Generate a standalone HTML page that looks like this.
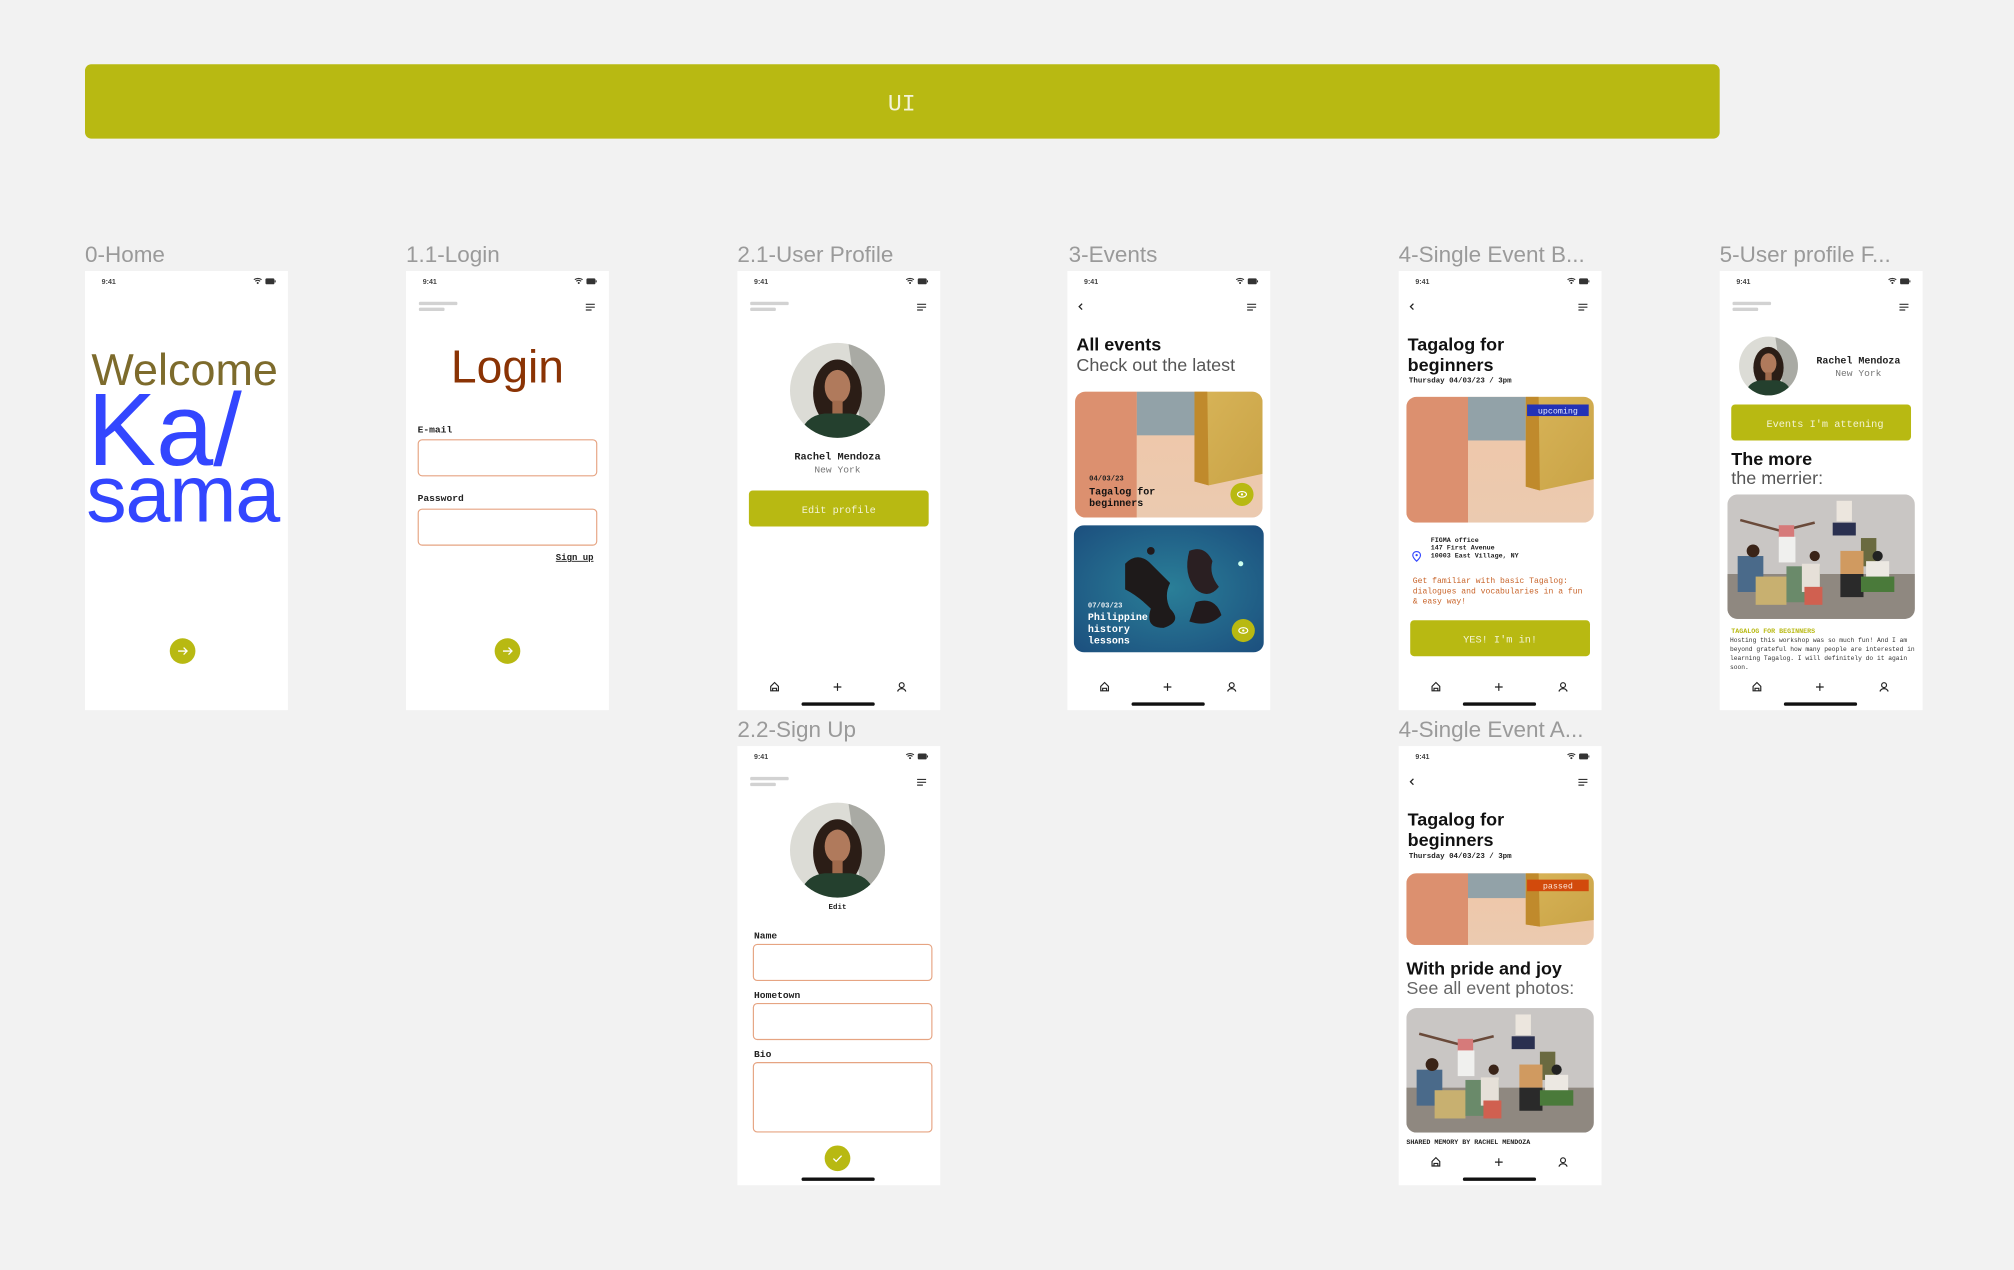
<!DOCTYPE html>
<html><head><meta charset="utf-8">
<style>
html,body{margin:0;padding:0;background:#f2f2f2;width:2014px;height:1270px;overflow:hidden}
svg{display:block}
.m{font-family:"Liberation Mono",monospace}
.s{font-family:"Liberation Sans","DejaVu Sans",sans-serif}
</style></head>
<body>
<svg width="2014" height="1270" viewBox="0 0 1568 989" xmlns="http://www.w3.org/2000/svg">
<defs>
  <g id="status">
    <text x="13" y="10" class="s" font-size="5.5" font-weight="bold" fill="#444">9:41</text>
    <path d="M131.5 6.8a5 5 0 0 1 6 0M132.6 8a3.2 3.2 0 0 1 3.8 0" stroke="#333" stroke-width="0.9" fill="none"/>
    <circle cx="134.5" cy="9.4" r="0.8" fill="#333"/>
    <rect x="140.5" y="5.8" width="7" height="4.6" rx="1" fill="#333"/>
    <rect x="147.7" y="7.3" width="0.8" height="1.6" fill="#333"/>
  </g>
  <g id="bars">
    <rect x="10" y="24" width="30" height="2.6" rx="1" fill="#d2d2d2"/>
    <rect x="10" y="28.6" width="20" height="2.6" rx="1" fill="#d2d2d2"/>
  </g>
  <g id="ham">
    <path d="M140 26h7M140 28.2h7M140 30.4h4.5" stroke="#333" stroke-width="0.9"/>
  </g>
  <g id="back"><path d="M11.5 25.5l-2.3 2.3 2.3 2.3" stroke="#222" stroke-width="1" fill="none"/></g>
  <g id="nav">
    <path d="M26 327v-3.5l3-3 3 3v3.5zM27.5 327v-2h3v2" stroke="#222" stroke-width="0.9" fill="none"/>
    <path d="M78 321v6M75 324h6" stroke="#222" stroke-width="0.9"/>
    <circle cx="128" cy="322.5" r="1.9" stroke="#222" stroke-width="0.9" fill="none"/>
    <path d="M124.8 327.5a3.4 3.4 0 0 1 6.4 0" stroke="#222" stroke-width="0.9" fill="none"/>
    <rect x="50" y="336" width="57" height="2.6" rx="1.3" fill="#111"/>
  </g>
  <clipPath id="avc"><circle cx="0" cy="0" r="37"/></clipPath>
  <g id="avatar">
    <g clip-path="url(#avc)">
      <rect x="-40" y="-40" width="80" height="80" fill="#dcdcd6"/>
      <path d="M8 -40L40 -40L40 40L20 40Z" fill="#a9aaa4"/>
      <ellipse cx="0" cy="2" rx="19" ry="26" fill="#2b1d16"/>
      <ellipse cx="0" cy="-3" rx="10" ry="13" fill="#b07a5c"/>
      <path d="M-30 40Q-28 20 -10 18L10 18Q28 20 30 40Z" fill="#24402e"/>
      <rect x="-4" y="8" width="8" height="10" fill="#a06a4c"/>
    </g>
  </g>
  <linearGradient id="peachFloor" x1="0" y1="0" x2="0" y2="1">
    <stop offset="0" stop-color="#f0c7a8"/><stop offset="1" stop-color="#ebcab0"/>
  </linearGradient>
  <linearGradient id="ochre" x1="0" y1="0" x2="1" y2="1">
    <stop offset="0" stop-color="#d8b458"/><stop offset="1" stop-color="#c9a346"/>
  </linearGradient>
  <g id="peach">
    <rect x="0" y="0" width="146" height="98" fill="url(#peachFloor)"/>
    <rect x="48" y="0" width="45" height="34" fill="#92a2a8"/>
    <rect x="0" y="0" width="48" height="98" fill="#dc906f"/>
    <path d="M93 0L146 0L146 64L104 73L93 70Z" fill="url(#ochre)"/>
    <path d="M93 0L103 0L104 73L93 70Z" fill="#c08a2c"/>
  </g>
  <radialGradient id="sea" cx="0.5" cy="0.5" r="0.7">
    <stop offset="0" stop-color="#2a7f98"/><stop offset="1" stop-color="#1c4f7e"/>
  </radialGradient>
  <g id="people">
    <rect x="0" y="0" width="146" height="97" fill="#c9c6c4"/>
    <rect x="0" y="62" width="146" height="35" fill="#8f8880"/>
    <path d="M10 20L40 28L52 26L68 22" stroke="#6a4a3a" stroke-width="2" fill="none"/>
    <rect x="40" y="24" width="12" height="10" fill="#d67a7a"/>
    <rect x="40" y="33" width="13" height="20" fill="#f0f0ee"/>
    <rect x="85" y="5" width="12" height="16" fill="#ece6de"/>
    <rect x="82" y="22" width="18" height="10" fill="#2a3050"/>
    <rect x="104" y="34" width="12" height="22" fill="#6a6a40"/>
    <rect x="8" y="48" width="20" height="28" fill="#4a6a8a"/>
    <rect x="22" y="64" width="24" height="22" fill="#c8b070"/>
    <rect x="46" y="56" width="26" height="28" fill="#6a8a6a"/>
    <rect x="58" y="54" width="14" height="22" fill="#e6e0d8"/>
    <rect x="60" y="72" width="14" height="14" fill="#d06050"/>
    <rect x="88" y="44" width="18" height="18" fill="#d09a60"/>
    <rect x="88" y="62" width="18" height="18" fill="#2a2a2a"/>
    <rect x="108" y="52" width="18" height="14" fill="#ece8e2"/>
    <rect x="104" y="64" width="26" height="12" fill="#4a7a3a"/>
    <circle cx="20" cy="44" r="5" fill="#3a2418"/>
    <circle cx="68" cy="48" r="4" fill="#3a2418"/>
    <circle cx="117" cy="48" r="4" fill="#222"/>
  </g>
  <clipPath id="c1"><rect x="0" y="0" width="146" height="98" rx="8"/></clipPath>
  <clipPath id="c2"><rect x="0" y="0" width="146" height="56" rx="8"/></clipPath>
  <clipPath id="c3"><rect x="0" y="0" width="146" height="97" rx="8"/></clipPath>
  <clipPath id="c4"><rect x="0" y="0" width="148" height="99" rx="8"/></clipPath>
</defs>

<rect width="1568" height="989" fill="#f2f2f2"/>
<rect x="66" y="50" width="1273" height="58" rx="5" fill="#b8b912"/>
<text x="702" y="86" text-anchor="middle" class="m" font-size="18" fill="#f4f4d8">UI</text>

<g class="s" font-size="17.5" fill="#9a9a9a">
<text x="66" y="204">0-Home</text>
<text x="316" y="204">1.1-Login</text>
<text x="574" y="204">2.1-User Profile</text>
<text x="832" y="204">3-Events</text>
<text x="1089" y="204">4-Single Event B...</text>
<text x="1339" y="204">5-User profile F...</text>
<text x="574" y="574">2.2-Sign Up</text>
<text x="1089" y="574">4-Single Event A...</text>
</g>

<!-- Home -->
<g transform="translate(66,211)">
<rect width="158" height="342" fill="#fff"/>
<use href="#status"/>
<text x="5" y="89" class="s" font-size="35" fill="#7d6b2c">Welcome</text>
<text x="2" y="151" class="s" font-size="80" fill="#3346ff">Ka/</text>
<text x="1" y="195" class="s" font-size="63" fill="#3346ff" letter-spacing="-1">sama</text>
<circle cx="76" cy="296" r="10" fill="#b8b912"/>
<path d="M72.5 296h7M76.8 293.3l2.7 2.7-2.7 2.7" stroke="#fff" stroke-width="1" fill="none"/>
</g>

<!-- Login -->
<g transform="translate(316,211)">
<rect width="158" height="342" fill="#fff"/>
<use href="#status"/><use href="#bars"/><use href="#ham"/>
<text x="79" y="87" text-anchor="middle" class="s" font-size="36" fill="#8a3304">Login</text>
<text x="9" y="126" class="m" font-size="7.5" font-weight="bold" fill="#222">E-mail</text>
<rect x="9.5" y="131.5" width="139" height="28" rx="3" fill="none" stroke="#e6a482" stroke-width="0.9"/>
<text x="9" y="179" class="m" font-size="7.5" font-weight="bold" fill="#222">Password</text>
<rect x="9.5" y="185.5" width="139" height="28" rx="3" fill="none" stroke="#e6a482" stroke-width="0.9"/>
<text x="146" y="225" text-anchor="end" class="m" font-size="7" font-weight="bold" fill="#222" text-decoration="underline">Sign up</text>
<circle cx="79" cy="296" r="10" fill="#b8b912"/>
<path d="M75.5 296h7M79.8 293.3l2.7 2.7-2.7 2.7" stroke="#fff" stroke-width="1" fill="none"/>
</g>

<!-- Profile -->
<g transform="translate(574,211)">
<rect width="158" height="342" fill="#fff"/>
<use href="#status"/><use href="#bars"/><use href="#ham"/>
<use href="#avatar" transform="translate(78,93)"/>
<text x="78" y="147" text-anchor="middle" class="m" font-size="8" font-weight="bold" fill="#222">Rachel Mendoza</text>
<text x="78" y="157" text-anchor="middle" class="m" font-size="7.5" fill="#777">New York</text>
<rect x="9" y="171" width="140" height="28" rx="3" fill="#b8b912"/>
<text x="79" y="188.5" text-anchor="middle" class="m" font-size="8" fill="#f4f4d6">Edit profile</text>
<use href="#nav"/>
</g>

<!-- Events -->
<g transform="translate(831,211)">
<rect width="158" height="342" fill="#fff"/>
<use href="#status"/><use href="#back"/><use href="#ham"/>
<text x="7" y="62" class="s" font-size="14" font-weight="bold" fill="#111">All events</text>
<text x="7" y="78" class="s" font-size="14" fill="#555">Check out the latest</text>
<g transform="translate(6,94)">
  <g clip-path="url(#c1)"><use href="#peach"/></g>
  <text x="11" y="69" class="m" font-size="5.6" font-weight="bold" fill="#222">04/03/23</text>
  <text x="11" y="80" class="m" font-size="7.8" font-weight="bold" fill="#111">Tagalog for</text>
  <text x="11" y="89" class="m" font-size="7.8" font-weight="bold" fill="#111">beginners</text>
  <circle cx="130" cy="80" r="9" fill="#b8b912"/>
  <ellipse cx="130" cy="80" rx="3.5" ry="2.2" stroke="#fff" stroke-width="0.9" fill="none"/><circle cx="130" cy="80" r="0.9" fill="#fff"/>
</g>
<g transform="translate(5,198)">
  <g clip-path="url(#c4)">
    <rect width="148" height="99" fill="url(#sea)"/>
    <path d="M40 30q10-10 20 0t15 15q-5 10 0 20q10 10 -5 15q-15 0 -10-15q-10-10 -20-15z" fill="#1e1a1a"/>
    <path d="M90 20q12-5 18 8q-3 10 5 20q-8 10 -18 2q-10-12 -5-30z" fill="#2a1f22"/>
    <path d="M95 60q15 -5 20 10q-10 10 -25 5z" fill="#221a1c"/>
    <circle cx="60" cy="20" r="3" fill="#221a1c"/>
    <circle cx="130" cy="30" r="2" fill="#cfe"/>
  </g>
  <text x="11" y="64" class="m" font-size="5.6" font-weight="bold" fill="#e8eef2">07/03/23</text>
  <text x="11" y="74" class="m" font-size="7.8" font-weight="bold" fill="#fff">Philippine</text>
  <text x="11" y="83" class="m" font-size="7.8" font-weight="bold" fill="#fff">history</text>
  <text x="11" y="92" class="m" font-size="7.8" font-weight="bold" fill="#fff">lessons</text>
  <circle cx="132" cy="82" r="9" fill="#b8b912"/>
  <ellipse cx="132" cy="82" rx="3.5" ry="2.2" stroke="#fff" stroke-width="0.9" fill="none"/><circle cx="132" cy="82" r="0.9" fill="#fff"/>
</g>
<use href="#nav"/>
</g>

<!-- Single Event B -->
<g transform="translate(1089,211)">
<rect width="158" height="342" fill="#fff"/>
<use href="#status"/><use href="#back"/><use href="#ham"/>
<text x="7" y="62" class="s" font-size="14" font-weight="bold" fill="#111">Tagalog for</text>
<text x="7" y="78" class="s" font-size="14" font-weight="bold" fill="#111">beginners</text>
<text x="8" y="87" class="m" font-size="5.8" font-weight="bold" fill="#222">Thursday 04/03/23 / 3pm</text>
<g transform="translate(6,98)">
  <g clip-path="url(#c1)"><use href="#peach"/></g>
  <rect x="94" y="6" width="48" height="9" fill="#2232b6"/>
  <text x="118" y="13" text-anchor="middle" class="m" font-size="6.5" fill="#e8ecff">upcoming</text>
</g>
<path d="M14 218.5c-1.8 0-3 1.3-3 2.8 0 2 3 4.7 3 4.7s3-2.7 3-4.7c0-1.5-1.2-2.8-3-2.8z" stroke="#3346ff" stroke-width="0.9" fill="none"/>
<circle cx="14" cy="221.3" r="0.9" fill="#3346ff"/>
<g class="m" font-size="5.2" font-weight="bold" fill="#222">
<text x="25" y="211">FIGMA office</text>
<text x="25" y="217">147 First Avenue</text>
<text x="25" y="223">10003 East Village, NY</text>
</g>
<g class="m" font-size="6.3" fill="#c8642a">
<text x="11" y="243">Get familiar with basic Tagalog:</text>
<text x="11" y="251">dialogues and vocabularies in a fun</text>
<text x="11" y="259">&amp; easy way!</text>
</g>
<rect x="9" y="272" width="140" height="28" rx="3" fill="#b8b912"/>
<text x="79" y="289.5" text-anchor="middle" class="m" font-size="8" fill="#f4f4d6">YES! I'm in!</text>
<use href="#nav"/>
</g>

<!-- Profile F -->
<g transform="translate(1339,211)">
<rect width="158" height="342" fill="#fff"/>
<use href="#status"/><use href="#bars"/><use href="#ham"/>
<use href="#avatar" transform="translate(38,74) scale(0.62)"/>
<text x="108" y="72" text-anchor="middle" class="m" font-size="7.8" font-weight="bold" fill="#222">Rachel Mendoza</text>
<text x="108" y="82" text-anchor="middle" class="m" font-size="7.5" fill="#777">New York</text>
<rect x="9" y="104" width="140" height="28" rx="3" fill="#b8b912"/>
<text x="82" y="121.5" text-anchor="middle" class="m" font-size="8" fill="#f4f4d6">Events I'm attening</text>
<text x="9" y="151" class="s" font-size="14" font-weight="bold" fill="#111">The more</text>
<text x="9" y="166" class="s" font-size="14" fill="#555">the merrier:</text>
<g transform="translate(6,174)"><g clip-path="url(#c3)"><use href="#people"/></g></g>
<text x="9" y="282" class="m" font-size="5.2" font-weight="bold" fill="#b8b912">TAGALOG FOR BEGINNERS</text>
<g class="m" font-size="4.9" fill="#333">
<text x="8" y="289">Hosting this workshop was so much fun! And I am</text>
<text x="8" y="296">beyond grateful how many people are interested in</text>
<text x="8" y="303">learning Tagalog. I will definitely do it again</text>
<text x="8" y="310">soon.</text>
</g>
<use href="#nav"/>
</g>

<!-- Sign Up -->
<g transform="translate(574,581)">
<rect width="158" height="342" fill="#fff"/>
<use href="#status"/><use href="#bars"/><use href="#ham"/>
<use href="#avatar" transform="translate(78,81)"/>
<text x="78" y="127" text-anchor="middle" class="m" font-size="5.8" font-weight="bold" fill="#222">Edit</text>
<text x="13" y="150" class="m" font-size="7.5" font-weight="bold" fill="#222">Name</text>
<rect x="12.5" y="154.5" width="139" height="28" rx="3" fill="none" stroke="#e6a482" stroke-width="0.9"/>
<text x="13" y="196" class="m" font-size="7.5" font-weight="bold" fill="#222">Hometown</text>
<rect x="12.5" y="200.5" width="139" height="28" rx="3" fill="none" stroke="#e6a482" stroke-width="0.9"/>
<text x="13" y="242" class="m" font-size="7.5" font-weight="bold" fill="#222">Bio</text>
<rect x="12.5" y="246.5" width="139" height="54" rx="3" fill="none" stroke="#e6a482" stroke-width="0.9"/>
<circle cx="78" cy="321" r="10" fill="#b8b912"/>
<path d="M74.8 321.2l2.2 2.2 4.2-4.4" stroke="#fff" stroke-width="1" fill="none"/>
<rect x="50" y="336" width="57" height="2.6" rx="1.3" fill="#111"/>
</g>

<!-- Single Event A -->
<g transform="translate(1089,581)">
<rect width="158" height="342" fill="#fff"/>
<use href="#status"/><use href="#back"/><use href="#ham"/>
<text x="7" y="62" class="s" font-size="14" font-weight="bold" fill="#111">Tagalog for</text>
<text x="7" y="78" class="s" font-size="14" font-weight="bold" fill="#111">beginners</text>
<text x="8" y="87" class="m" font-size="5.8" font-weight="bold" fill="#222">Thursday 04/03/23 / 3pm</text>
<g transform="translate(6,99)">
  <g clip-path="url(#c2)"><use href="#peach" transform="scale(1,0.57)"/></g>
  <rect x="94" y="5" width="48" height="9" fill="#d24a0c"/>
  <text x="118" y="12" text-anchor="middle" class="m" font-size="6.5" fill="#fbe6da">passed</text>
</g>
<text x="6" y="178" class="s" font-size="14" font-weight="bold" fill="#111">With pride and joy</text>
<text x="6" y="193" class="s" font-size="14" fill="#666">See all event photos:</text>
<g transform="translate(6,204)"><g clip-path="url(#c3)"><use href="#people"/></g></g>
<text x="6" y="310" class="m" font-size="5.2" font-weight="bold" fill="#222">SHARED MEMORY BY RACHEL MENDOZA</text>
<use href="#nav"/>
</g>
</svg>
</body></html>
